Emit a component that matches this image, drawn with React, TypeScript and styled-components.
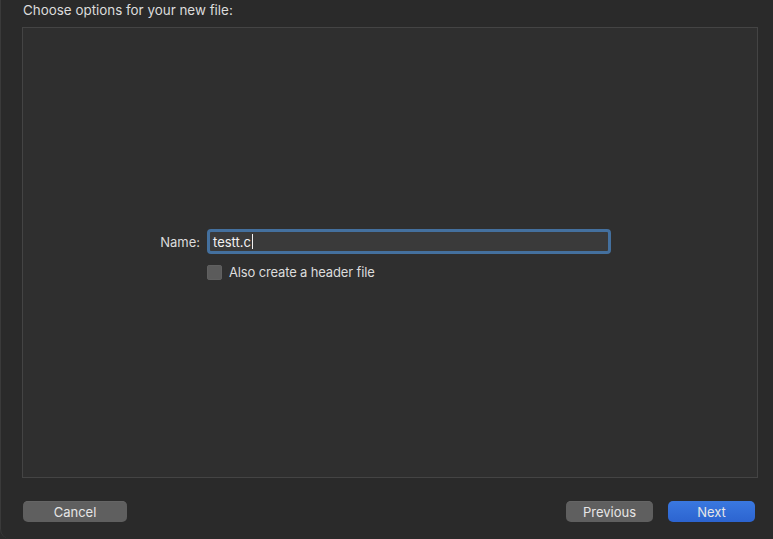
import React from "react";
import styled, { createGlobalStyle } from "styled-components";

const Global = createGlobalStyle`
  html, body { margin: 0; padding: 0; background: #2a2a2a; }
  body { font-family: Inter, "Liberation Sans", Arial, sans-serif; -webkit-font-smoothing: antialiased; }
`;

const Window = styled.div`
  width: 773px;
  height: 539px;
  box-sizing: border-box;
  background: #2a2a2a;
  border-left: 1px solid #3a3a3a;
  border-bottom-left-radius: 10px;
  display: flex;
  flex-direction: column;
  padding: 0 15px 16px 21px;
  overflow: hidden;
`;

const Title = styled.div`
  font-size: 13.4px;
  color: #dcdcdc;
  height: 28px;
  line-height: 22px;
  margin-top: -1px;
  padding-left: 1px;
`;

const Panel = styled.div`
  height: 451px;
  box-sizing: border-box;
  border: 1px solid #444;
  background: #2f2f2f;
  display: flex;
  flex-direction: column;
  padding-top: 201px;
`;

const Row = styled.div`
  display: flex;
  align-items: center;
`;

const Label = styled.div`
  width: 184px;
  text-align: right;
  font-size: 13px;
  color: #dcdcdc;
  padding-right: 7px;
  box-sizing: border-box;
`;

const Input = styled.div`
  width: 404px;
  height: 25px;
  box-sizing: border-box;
  border: 3px solid #44709e;
  border-radius: 4px;
  background: #3a3a3a;
  color: #f2f2f2;
  font-size: 13px;
  display: flex;
  align-items: center;
  padding-left: 3px;
`;

const Caret = styled.span`
  display: inline-block;
  width: 1px;
  height: 15px;
  background: #f2f2f2;
  margin-left: 1px;
`;

const CheckRow = styled.div`
  display: flex;
  align-items: center;
  margin-top: 10px;
  margin-left: 184px;
  gap: 7px;
`;

const Box = styled.div`
  width: 15px;
  height: 15px;
  border-radius: 3px;
  background: #5b5b5b;
  box-shadow: inset 0 0 0 0.5px #666;
`;

const CheckLabel = styled.div`
  font-size: 13px;
  letter-spacing: -0.15px;
  color: #dcdcdc;
`;

const Footer = styled.div`
  display: flex;
  align-items: center;
  gap: 15px;
  margin-top: 23px;
  padding-left: 1px;
  padding-right: 3px;
`;

const Spacer = styled.div`
  flex: 1;
`;

const Button = styled.div<{ $primary?: boolean; $w: number }>`
  width: ${(p) => p.$w}px;
  height: 21px;
  border-radius: 5px;
  box-sizing: border-box;
  display: flex;
  align-items: center;
  justify-content: center;
  font-size: 13px;
  color: #e6e6e6;
  background: ${(p) => (p.$primary ? "linear-gradient(#3a78e0, #2c64d0)" : "#5f5f5f")};
  box-shadow: ${(p) => (p.$primary ? "none" : "inset 0 0.5px 0 #6c6c6c")};
`;

export default function App() {
  return (
    <>
      <Global />
      <Window>
        <Title>Choose options for your new file:</Title>
        <Panel>
          <Row>
            <Label>Name:</Label>
            <Input>
              testt.c
              <Caret />
            </Input>
          </Row>
          <CheckRow>
            <Box />
            <CheckLabel>Also create a header file</CheckLabel>
          </CheckRow>
        </Panel>
        <Footer>
          <Button $w={104}>Cancel</Button>
          <Spacer />
          <Button $w={87}>Previous</Button>
          <Button $w={87} $primary>
            Next
          </Button>
        </Footer>
      </Window>
    </>
  );
}
